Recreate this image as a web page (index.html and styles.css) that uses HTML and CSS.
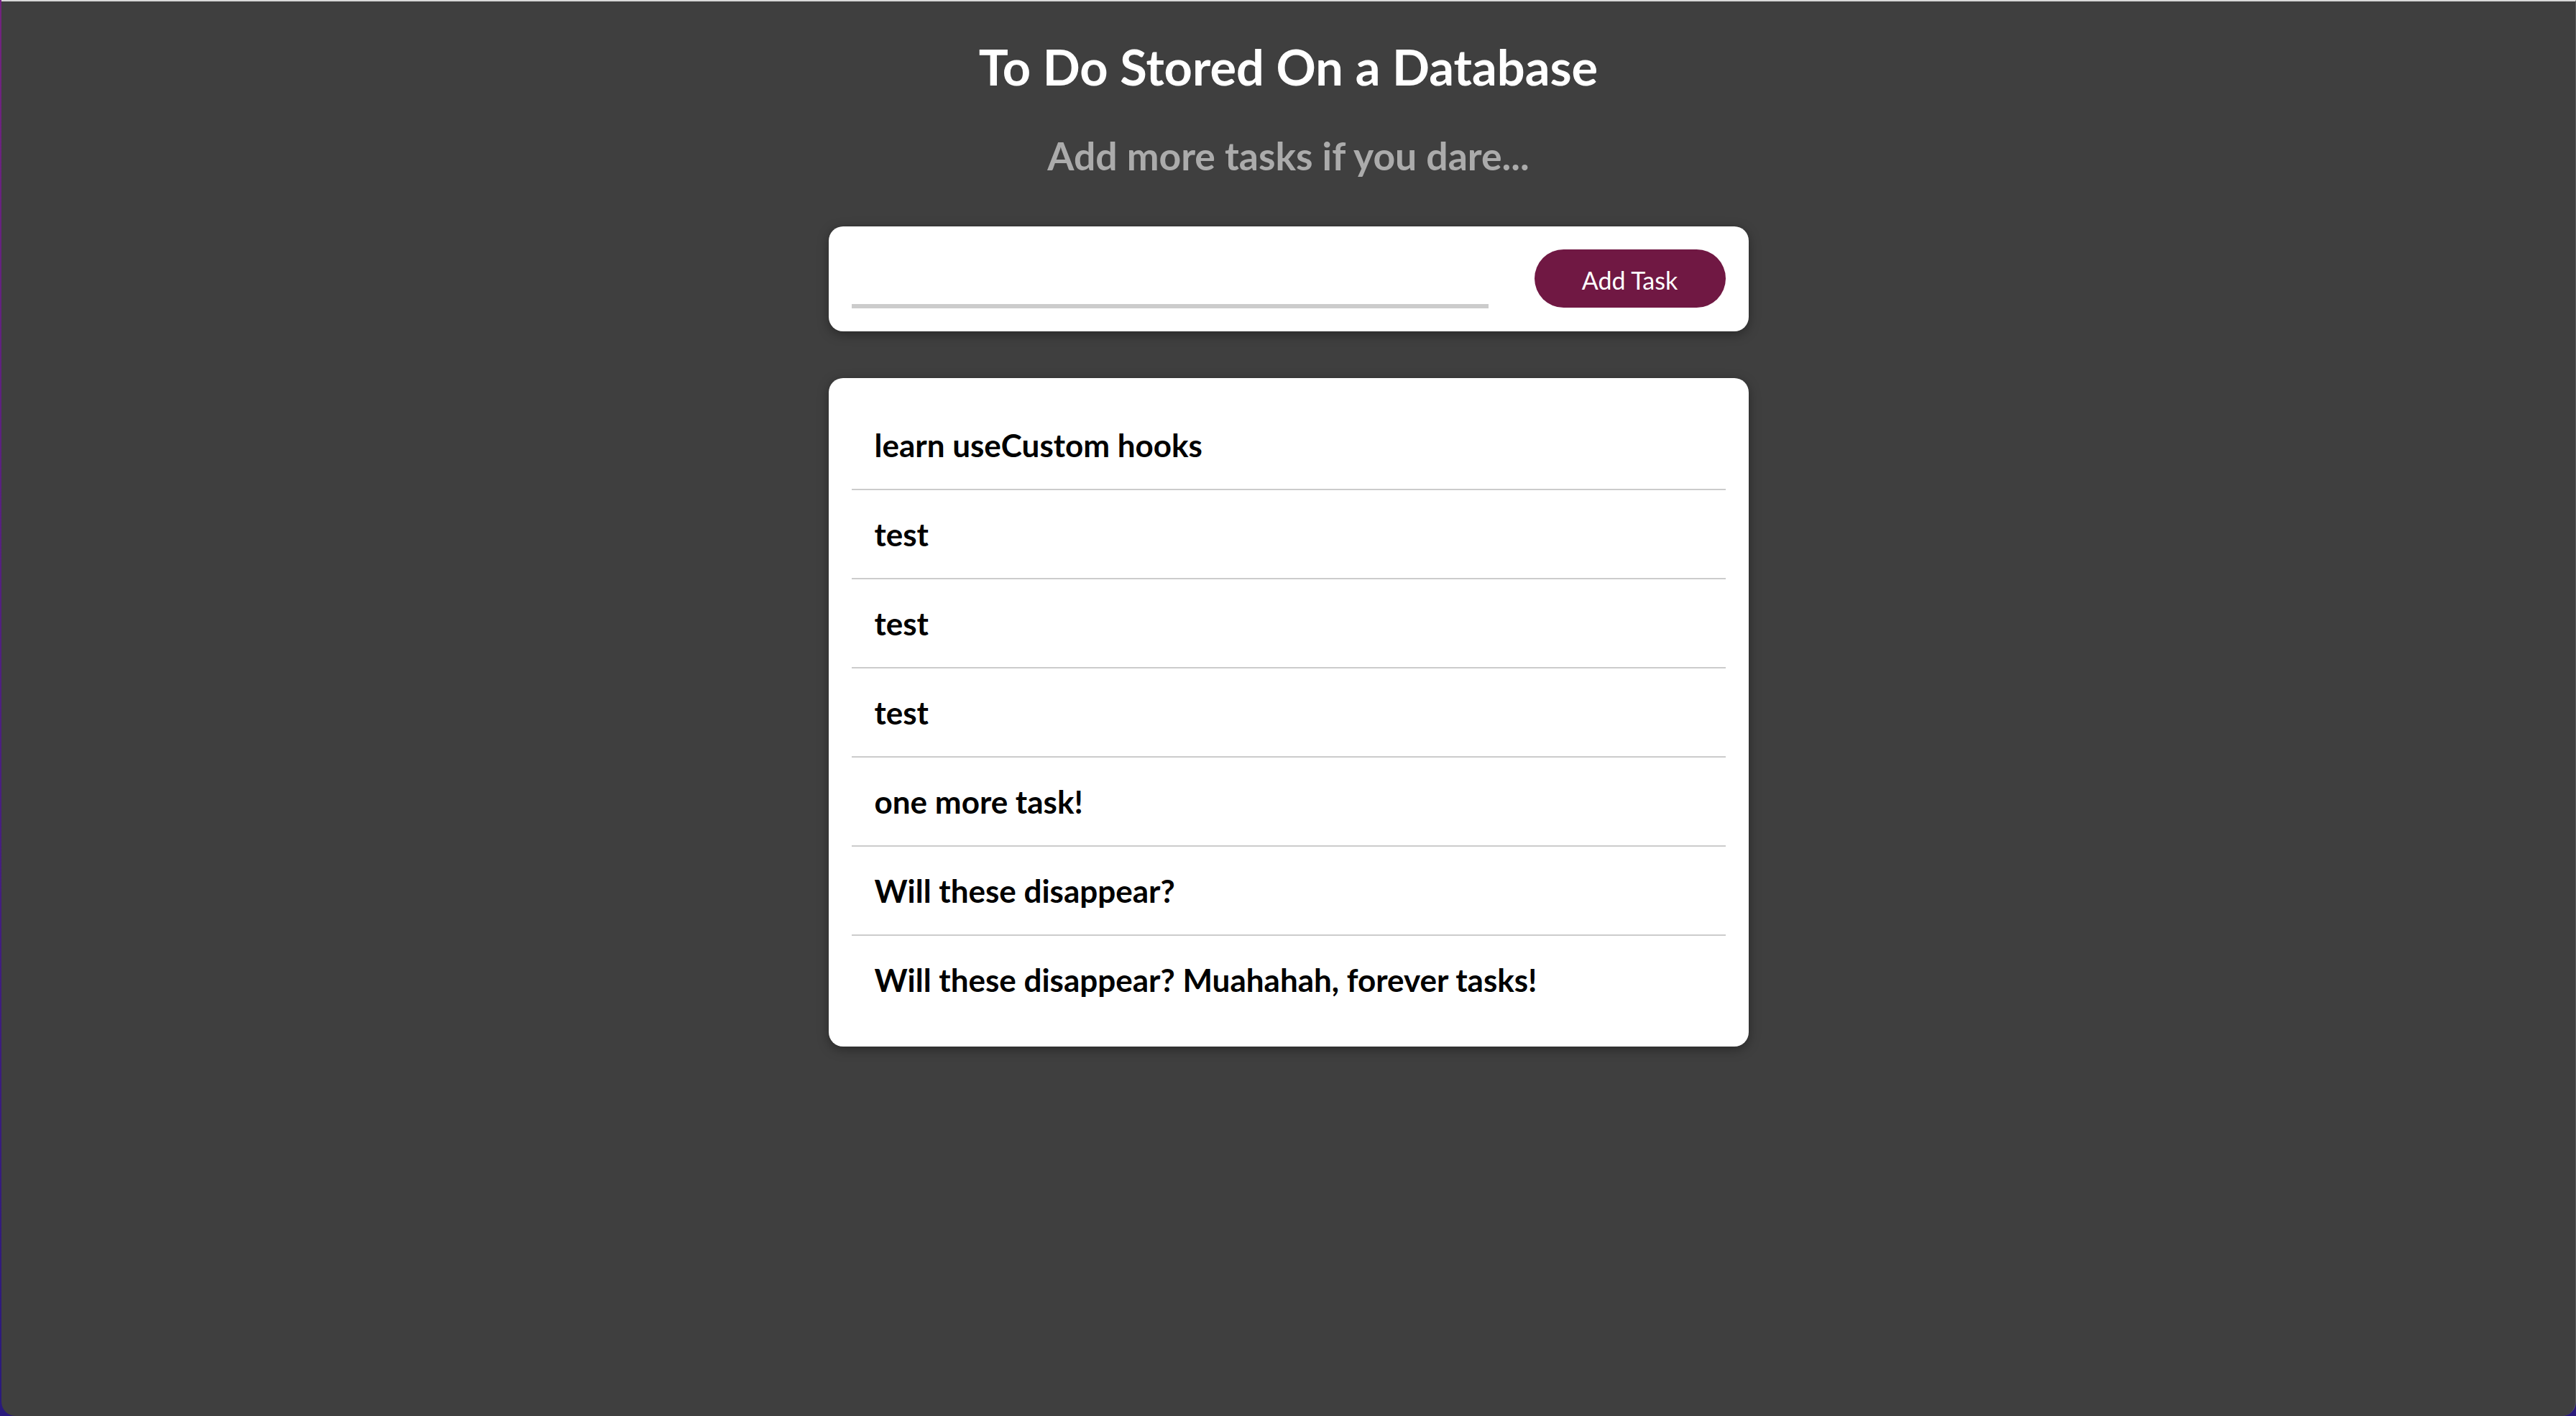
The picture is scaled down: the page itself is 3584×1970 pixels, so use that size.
FILE: index.html
```html
<!DOCTYPE html>
<html lang="en">
<head>
<meta charset="utf-8">
<title>To Do Stored On a Database</title>
<link rel="stylesheet" href="styles.css">
</head>
<body>
<div class="window">
  <header class="header">
    <h1 class="title">To Do Stored On a Database</h1>
    <h2 class="subtitle">Add more tasks if you dare...</h2>
  </header>
  <main class="content">
    <form class="card task-form">
      <input class="task-input" type="text" aria-label="New task">
      <button class="add-button" type="button">Add Task</button>
    </form>
    <section class="card task-list">
      <ul class="tasks">
        <li class="task">learn useCustom hooks</li>
        <li class="task">test</li>
        <li class="task">test</li>
        <li class="task">test</li>
        <li class="task">one more task!</li>
        <li class="task">Will these disappear?</li>
        <li class="task">Will these disappear? Muahahah, forever tasks!</li>
      </ul>
    </section>
  </main>
</div>
</body>
</html>
```
FILE: styles.css
```css
html {
  margin: 0;
  padding: 0;
  height: 100%;
  background: linear-gradient(to bottom, #74237f 0%, #4a1f80 55%, #2a1a7c 100%);
}

body {
  margin: 0;
  padding: 0;
  height: 100%;
  font-family: "Lato", "Liberation Sans", sans-serif;
}

.window {
  box-sizing: border-box;
  height: 1970px;
  margin-left: 2px;
  background: #3f3f3f;
  border-top: 2px solid #d9d9d9;
  border-right: 1px solid #5c5c5c;
  border-bottom-left-radius: 20px;
  border-bottom-right-radius: 20px;
  overflow: hidden;
}

.header {
  text-align: center;
}

.title {
  margin: 51px 0 0;
  font-size: 68.5px;
  line-height: 80px;
  font-weight: 700;
  color: #ffffff;
}

.subtitle {
  margin: 51px 0 0;
  font-size: 53.5px;
  line-height: 64px;
  font-weight: 700;
  color: #ababab;
}

.content {
  display: flex;
  flex-direction: column;
  align-items: center;
  gap: 65px;
  margin-top: 67px;
}

.card {
  box-sizing: border-box;
  width: 1280px;
  background: #ffffff;
  border-radius: 20px;
  box-shadow: 0 4px 16px rgba(0, 0, 0, 0.35);
}

.task-form {
  display: flex;
  align-items: flex-end;
  padding: 32px;
  margin: 0;
}

.task-input {
  flex: 1;
  box-sizing: border-box;
  height: 82px;
  border: none;
  border-bottom: 6px solid #cccccc;
  outline: none;
  background: transparent;
  font-family: inherit;
  font-size: 40px;
  padding: 0;
}

.add-button {
  box-sizing: border-box;
  width: 266px;
  height: 81px;
  margin-left: 64px;
  margin-bottom: 1px;
  border: none;
  border-radius: 41px;
  background: #701843;
  color: #ffffff;
  font-family: inherit;
  font-size: 34px;
  font-weight: 400;
  padding: 3px 0 0;
}

.task-list {
  padding: 32px;
}

.tasks {
  list-style: none;
  margin: 0;
  padding: 0;
}

.task {
  padding: 32px 32px;
  font-size: 44px;
  line-height: 58px;
  font-weight: 700;
  color: #000000;
  border-bottom: 2px solid #cccccc;
}

.task:last-child {
  border-bottom: none;
}
```
